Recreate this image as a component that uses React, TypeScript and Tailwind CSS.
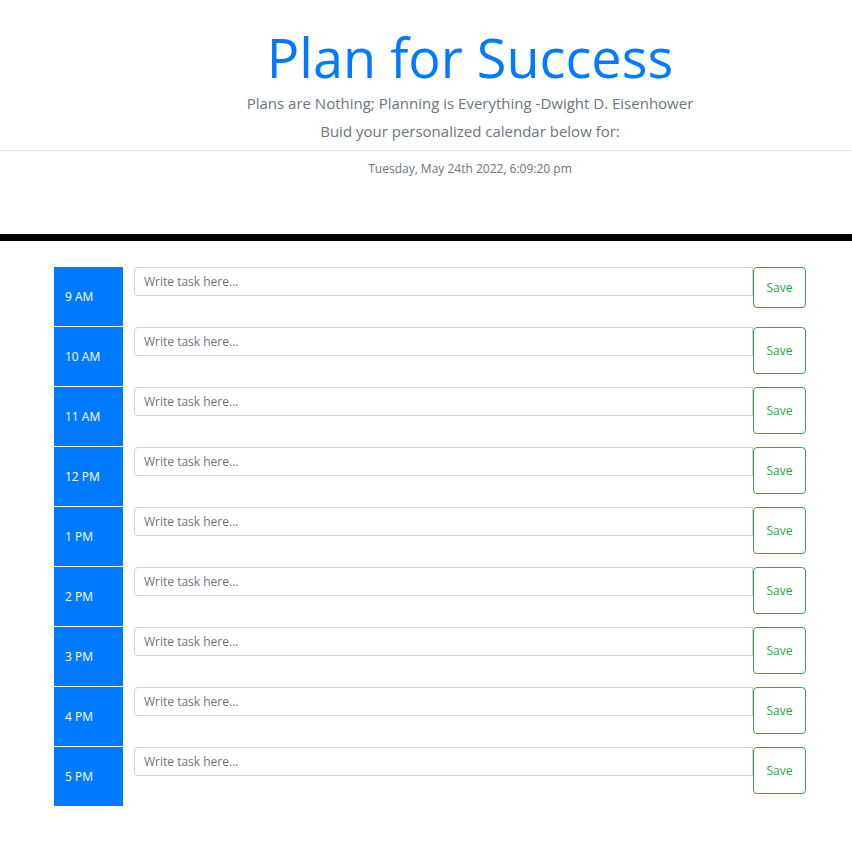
const hours = ["9 AM", "10 AM", "11 AM", "12 PM", "1 PM", "2 PM", "3 PM", "4 PM", "5 PM"];

function HourRow({ label, first }: { label: string; first: boolean }) {
  return (
    <div className="flex h-[60px] items-start">
      <div className="flex h-[59px] w-[69px] items-center bg-[#007bff] pl-[11px] text-[12px] text-white">
        {label}
      </div>
      <div className="ml-[11px] flex flex-1 items-start">
        <input
          type="text"
          placeholder="Write task here..."
          className="h-[29px] flex-1 rounded-l-[4px] border border-[#ced4da] px-[9px] text-[12px] text-[#495057] outline-none placeholder:text-[#6c757d]"
        />
        <button
          className={`${first ? "h-[41px]" : "h-[47px]"} w-[53px] rounded-[4px] border border-[#3f9d52] text-[12px] text-[#28a745]`}
        >
          Save
        </button>
      </div>
    </div>
  );
}

export default function App() {
  return (
    <div className="min-h-[867px] bg-white font-['Open_Sans',sans-serif]">
      <header className="border-b-[7px] border-black pb-[56px] text-center">
        <div className="pl-[88px]">
          <h1 className="pt-[24px] text-[54px] leading-[67px] text-[#007bff]">Plan for Success</h1>
          <p className="text-[15px] leading-[24px] text-[#6c757d]">
            Plans are Nothing; Planning is Everything -Dwight D. Eisenhower
          </p>
          <p className="mt-[4px] text-[15px] leading-[24px] text-[#6c757d]">
            Buid your personalized calendar below for:
          </p>
        </div>
        <hr className="mt-[7px] border-t border-[#e5e5e5]" />
        <p className="mt-[9px] pl-[88px] text-[12px] leading-[18px] text-[#6c757d]">
          Tuesday, May 24th 2022, 6:09:20 pm
        </p>
      </header>
      <main className="pl-[54px] pr-[46px] pt-[26px]">
        {hours.map((h, i) => (
          <HourRow key={h} label={h} first={i === 0} />
        ))}
      </main>
    </div>
  );
}
